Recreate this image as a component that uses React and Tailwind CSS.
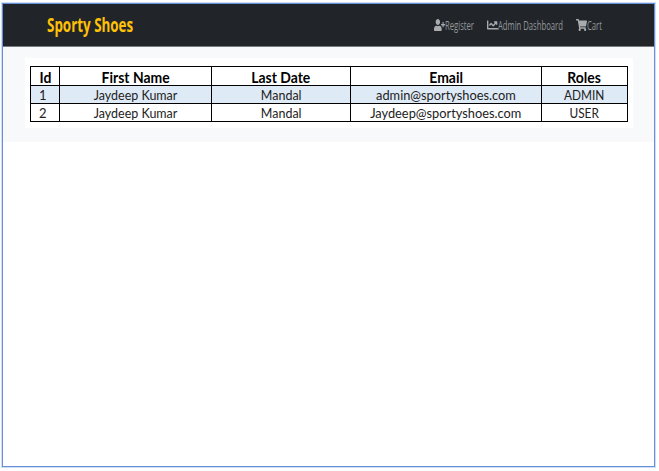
import { FaUserPlus, FaChartLine, FaShoppingCart } from "react-icons/fa";

const users = [
  { id: 1, first: "Jaydeep Kumar", last: "Mandal", email: "admin@sportyshoes.com", role: "ADMIN" },
  { id: 2, first: "Jaydeep Kumar", last: "Mandal", email: "Jaydeep@sportyshoes.com", role: "USER" },
];

function NavLink({ icon: Icon, label, width }) {
  return (
    <a className={`flex shrink-0 items-center whitespace-nowrap text-[#94979a] ${width}`}>
      <Icon className="h-3 w-[11px] shrink-0 text-[#a9abad]" preserveAspectRatio="none" />
      <span className="origin-left scale-x-[0.59] font-['Open_Sans',sans-serif] text-[13px] leading-4">{label}</span>
    </a>
  );
}

function Heading({ children }) {
  return (
    <th className="border border-black p-0 text-center text-[15px] leading-none font-bold text-black">
      <span className="inline-block translate-y-px scale-x-[0.93]">{children}</span>
    </th>
  );
}

function Cell({ children, scale = "scale-x-[0.96]" }) {
  return (
    <td className="border border-black p-0 text-center leading-none whitespace-nowrap">
      <span className={`inline-block translate-y-px ${scale}`}>{children}</span>
    </td>
  );
}

export default function App() {
  return (
    <div className="h-[471px] w-[659px] overflow-hidden bg-white pt-[2px] pl-px">
      <div className="h-[466px] w-[655px] border border-[#d0def4]">
        <div className="h-[464px] w-[653px] border border-[#6890d8] bg-white">
          <nav className="flex h-[43px] items-center border-b border-[#777b80] bg-[#212529] pl-[44px]">
            <div className="w-[387px] shrink-0">
              <span className="inline-block origin-left scale-x-[0.705] whitespace-nowrap font-['Open_Sans',sans-serif] text-[19px] leading-6 font-bold text-[#ffc107]">
                Sporty Shoes
              </span>
            </div>
            <NavLink icon={FaUserPlus} label="Register" width="w-[53px]" />
            <NavLink icon={FaChartLine} label="Admin Dashboard" width="w-[89px]" />
            <NavLink icon={FaShoppingCart} label="Cart" width="w-[30px]" />
          </nav>
          <main className="h-[95px] bg-[#f8f9fb] pt-[11px] pl-[22px]">
            <div className="h-[70px] w-[608px] bg-white pt-2 pl-[5px]">
              <table className="w-[598px] table-fixed border-collapse font-['Lato',sans-serif] text-[13px] text-[#222]">
                <colgroup>
                  <col className="w-[29px]" />
                  <col className="w-[152px]" />
                  <col className="w-[139px]" />
                  <col className="w-[191px]" />
                  <col className="w-[86px]" />
                </colgroup>
                <thead>
                  <tr className="h-[19px]">
                    <Heading>Id</Heading>
                    <Heading>First Name</Heading>
                    <Heading>Last Date</Heading>
                    <Heading>Email</Heading>
                    <Heading>Roles</Heading>
                  </tr>
                </thead>
                <tbody>
                  {users.map((u) => (
                    <tr key={u.id} className="h-[18px] odd:bg-[#deeaf6]">
                      <td className="border border-black p-0 pl-[8px] leading-none">
                        <span className="inline-block translate-y-px">{u.id}</span>
                      </td>
                      <Cell>{u.first}</Cell>
                      <Cell>{u.last}</Cell>
                      <Cell scale="scale-x-[0.985]">{u.email}</Cell>
                      <Cell scale="scale-x-[0.91]">{u.role}</Cell>
                    </tr>
                  ))}
                </tbody>
              </table>
            </div>
          </main>
        </div>
      </div>
    </div>
  );
}
